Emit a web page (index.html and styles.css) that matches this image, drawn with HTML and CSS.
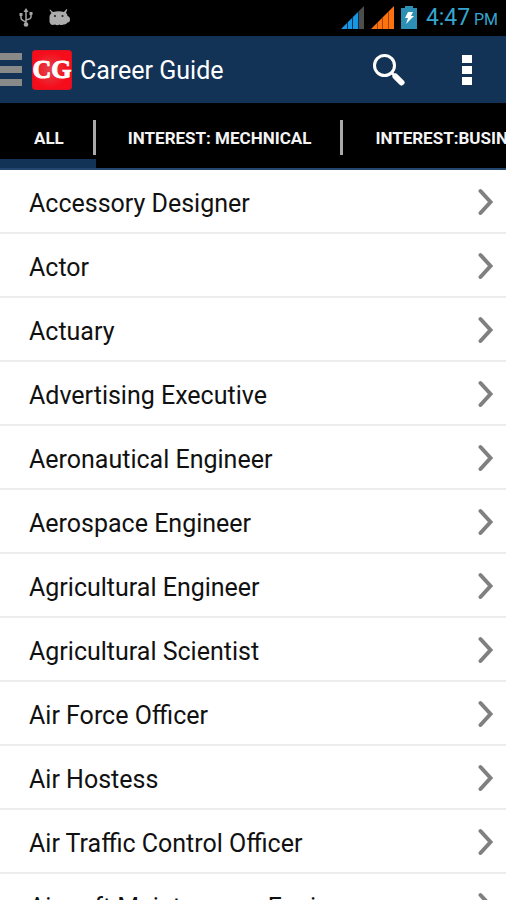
FILE: index.html
```html
<!DOCTYPE html>
<html lang="en">
<head>
<meta charset="utf-8">
<meta name="viewport" content="width=device-width, initial-scale=1">
<title>Career Guide</title>
<link rel="stylesheet" href="styles.css">
</head>
<body>
<div class="status">
  <svg class="usb" width="14" height="20" viewBox="0 0 14 20" fill="none" stroke="#a6a6a6" stroke-width="1.5" aria-hidden="true">
    <path d="M7 3v14M2 7v3q0 2 5 4M12 6v3q0 2-5 3"/>
    <path d="M7 0l2.500 4h-5zM.5 5h3v3h-3zM10.500 4h3v3h-3z" fill="#a6a6a6" stroke="none"/>
    <circle cx="7" cy="16.500" r="2.300" fill="#a6a6a6" stroke="none"/>
  </svg>
  <svg class="droid" width="22" height="17" viewBox="0 0 22 17" aria-hidden="true">
    <path d="M1 .5L4 3Q10 1.500 15 3L17.500 0l.7.500L17 4q1.500 1 1.500 3 2.500.500 2.500 3.500 0 3-2.500 3Q17 16 14.500 15.500 12 16.500 10.500 15.500 8 17 6 15.500 3 16.500 1.500 15 0 13.500.5 10 0 6 2.500 4L.5 1z" fill="#adadad"/>
    <circle cx="6" cy="7" r="1.100" fill="#222"/><circle cx="13.500" cy="7" r="1.100" fill="#222"/>
  </svg>
  <span class="space"></span>
  <svg class="signal" width="23" height="23" viewBox="0 0 23 23" aria-hidden="true">
    <path d="M0 23L17 6v17z" fill="#1696e3"/><path d="M18 5l5-5v23h-5z" fill="#4d4d4d"/>
    <path d="M6.500 16v7M11.500 11v12M17.500 5v18" stroke="#04334f"/>
  </svg>
  <svg class="signal" width="23" height="23" viewBox="0 0 23 23" aria-hidden="true">
    <path d="M0 23L23 0v23z" fill="#fb7210"/>
    <path d="M6.500 17v6M11.500 12v11M17.500 6v17" stroke="#a84400"/>
  </svg>
  <svg class="battery" width="16" height="23" viewBox="0 0 16 23" aria-hidden="true">
    <path d="M4 0h8v2h4v21H0V2h4z" fill="#2c8fb3"/><path d="M7 6h5l-2 4h3l-8 8 2-6H4z" fill="#fff"/>
  </svg>
  <time class="clock">4:47 <small>PM</small></time>
</div>
<header class="bar">
  <button class="menu" aria-label="Open menu"><i></i><i></i><i></i></button>
  <span class="logo">CG</span>
  <h1 class="title">Career Guide</h1>
  <button class="search" aria-label="Search">
    <svg width="32" height="32" viewBox="0 0 32 32" fill="none" stroke="#fff" aria-hidden="true">
      <circle cx="11.500" cy="11.500" r="10" stroke-width="3"/>
      <path d="M18.500 18.500l3 3" stroke-width="3"/><path d="M22.500 22.500l6 6" stroke-width="6" stroke-linecap="round"/>
    </svg>
  </button>
  <button class="more" aria-label="More options"><i></i><i></i><i></i></button>
</header>
<nav class="tabs">
  <a class="tab active" href="#all">ALL</a>
  <a class="tab" href="#mechnical">INTEREST: MECHNICAL</a>
  <a class="tab" href="#business">INTEREST:BUSINESS</a>
</nav>
<main>
  <ul class="list">
    <li><a href="#c1">Accessory Designer</a></li>
    <li><a href="#c2">Actor</a></li>
    <li><a href="#c3">Actuary</a></li>
    <li><a href="#c4">Advertising Executive</a></li>
    <li><a href="#c5">Aeronautical Engineer</a></li>
    <li><a href="#c6">Aerospace Engineer</a></li>
    <li><a href="#c7">Agricultural Engineer</a></li>
    <li><a href="#c8">Agricultural Scientist</a></li>
    <li><a href="#c9">Air Force Officer</a></li>
    <li><a href="#c10">Air Hostess</a></li>
    <li><a href="#c11">Air Traffic Control Officer</a></li>
    <li><a href="#c12">Aircraft Maintenance Engineer</a></li>
  </ul>
</main>
<script src="list.js"></script>
</body>
</html>
```
FILE: list.js
```js
// Adds the disclosure chevron to every row of the list.
document.querySelectorAll('.list a').forEach(function (row) {
  row.insertAdjacentHTML('beforeend',
    '<svg width="16" height="28" viewBox="0 0 16 28" fill="none" stroke="#808080" stroke-width="4" stroke-linecap="round" aria-hidden="true"><path d="M2.500 3l10 11-10 11"/></svg>');
});
```
FILE: styles.css
```css
* { box-sizing: border-box; }
body {
  margin: 0;
  height: 100vh;
  overflow: hidden;
  display: flex;
  flex-direction: column;
  background: #fff;
  color: #111;
  font-family: Roboto, "Liberation Sans", sans-serif;
}
a { color: inherit; text-decoration: none; }
button { border: 0; padding: 0; background: none; }
.status {
  flex: none;
  height: 36px;
  display: flex;
  align-items: center;
  padding: 0 8px 1px 19px;
  background: #000;
}
.droid { margin-left: 16px; }
.space { flex: 1; }
.signal { margin-right: 7px; }
.battery { margin-right: 9px; }
.clock { color: #35a5d0; font-size: 23px; line-height: 36px; padding-top: 2px; white-space: nowrap; }
.clock small { font-size: 16px; margin-left: -2px; }
.bar {
  flex: none;
  height: 67px;
  display: flex;
  align-items: center;
  background: #133356;
  color: #fff;
}
.menu { width: 22px; display: grid; gap: 6px; margin-right: 10px; }
.menu i { height: 7px; background: #898989; }
.logo {
  width: 40px;
  height: 40px;
  border-radius: 4px;
  background: radial-gradient(circle at 45% 50%, #e0444b, #f60d1b 60%);
  box-shadow: inset 0 0 2px #a0202c;
  font: bold 26px/40px "Liberation Serif", serif;
  display: flex;
  justify-content: center;
  -webkit-text-stroke: 1px #fff;
}
.title { flex: 1; margin: 0 0 0 8px; padding-top: 2px; font-size: 25px; font-weight: 400; line-height: 32px; }
.search { width: 32px; height: 32px; margin-right: 57px; }
.search svg { display: block; }
.more { width: 10px; margin-right: 34px; display: grid; gap: 3px; }
.more i { height: 8px; background: #fff; }
.tabs {
  flex: none;
  height: 67px;
  display: flex;
  overflow: hidden;
  background: #000;
  border-bottom: 2px solid #23476c;
  color: #f4f4f4;
}
.tab {
  flex: none;
  padding: 0 32px;
  border-bottom: 9px solid transparent;
  font-size: 17px;
  font-weight: 700;
  line-height: 70px;
  height: 65px;
  white-space: nowrap;
  background: linear-gradient(#aaa, #aaa) right 17px / 3px 35px no-repeat;
}
.tab.active { padding-left: 34px; border-bottom-color: #133356; }
.list { margin: 0; padding: 0; list-style: none; }
.list a {
  height: 64px;
  display: flex;
  align-items: center;
  justify-content: space-between;
  padding: 4px 12px 0 29px;
  border-bottom: 2px solid #ececec;
  font-size: 25px;
}
.list svg { margin-bottom: 2px; }
```
